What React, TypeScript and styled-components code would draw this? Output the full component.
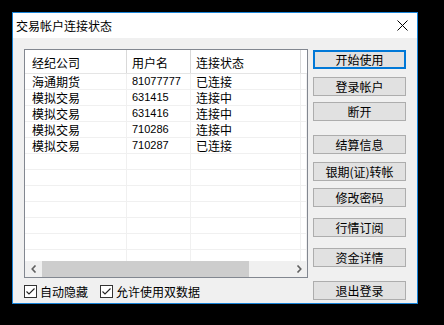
import React from "react";
import styled, { createGlobalStyle } from "styled-components";

const GlobalStyle = createGlobalStyle`
  html, body {
    margin: 0;
    padding: 0;
    background: #000;
  }
  body {
    font-family: "Noto Sans CJK SC", "Liberation Sans", sans-serif;
    font-size: 12px;
    color: #000;
  }
  * {
    box-sizing: border-box;
  }
`;

interface Account {
  broker: string;
  user: string;
  status: string;
}

const accounts: Account[] = [
  { broker: "海通期货", user: "81077777", status: "已连接" },
  { broker: "模拟交易", user: "631415", status: "连接中" },
  { broker: "模拟交易", user: "631416", status: "连接中" },
  { broker: "模拟交易", user: "710286", status: "连接中" },
  { broker: "模拟交易", user: "710287", status: "已连接" },
];

// gap above each button, taken from the original dialog
const buttons: { label: string; gap: number; primary?: boolean }[] = [
  { label: "开始使用", gap: 1, primary: true },
  { label: "登录帐户", gap: 8 },
  { label: "断开", gap: 6 },
  { label: "结算信息", gap: 14 },
  { label: "银期(证)转帐", gap: 8 },
  { label: "修改密码", gap: 7 },
  { label: "行情订阅", gap: 11 },
  { label: "资金详情", gap: 11 },
  { label: "退出登录", gap: 14 },
];

const EMPTY_ROWS = 8;

const Checkbox = ({ label }: { label: string }) => (
  <CheckLabel>
    <CheckBox>
      <svg width="11" height="11" viewBox="0 0 11 11">
        <path d="M1.5 5.5 L4 8 L9.5 2.5" fill="none" stroke="#222" strokeWidth="1.1" />
      </svg>
    </CheckBox>
    <span>{label}</span>
  </CheckLabel>
);

export default function App() {
  return (
    <>
      <GlobalStyle />
      <Backdrop>
        <Window>
          <TitleBar>
            <Title>交易帐户连接状态</Title>
            <CloseButton>
              <svg width="11" height="11" viewBox="0 0 11 11">
                <path d="M0.5 0.5 L10.5 10.5 M10.5 0.5 L0.5 10.5" stroke="#000" strokeWidth="1" />
              </svg>
            </CloseButton>
          </TitleBar>
          <Body>
            <LeftColumn>
              <ListBox>
                <HeaderRow>
                  <HeaderCell $first>经纪公司</HeaderCell>
                  <HeaderCell>用户名</HeaderCell>
                  <HeaderCell>连接状态</HeaderCell>
                  <HeaderFill />
                </HeaderRow>
                <Rows>
                  {accounts.map((a, i) => (
                    <Row key={i}>
                      <Cell $first>{a.broker}</Cell>
                      <Cell $number>{a.user}</Cell>
                      <Cell>{a.status}</Cell>
                      <Cell />
                    </Row>
                  ))}
                  {Array.from({ length: EMPTY_ROWS }).map((_, i) => (
                    <Row key={"e" + i}>
                      <Cell />
                      <Cell />
                      <Cell />
                      <Cell />
                    </Row>
                  ))}
                </Rows>
                <ScrollBar>
                  <ScrollArrow>
                    <svg width="6" height="8" viewBox="0 0 6 8">
                      <path d="M4.5 0.5 L1.2 4 L4.5 7.5" fill="none" stroke="#606060" strokeWidth="1.6" />
                    </svg>
                  </ScrollArrow>
                  <ScrollTrack>
                    <ScrollThumb />
                  </ScrollTrack>
                  <ScrollArrow>
                    <svg width="6" height="8" viewBox="0 0 6 8">
                      <path d="M1.5 0.5 L4.8 4 L1.5 7.5" fill="none" stroke="#606060" strokeWidth="1.6" />
                    </svg>
                  </ScrollArrow>
                </ScrollBar>
              </ListBox>
              <Options>
                <Checkbox label="自动隐藏" />
                <Checkbox label="允许使用双数据" />
              </Options>
            </LeftColumn>
            <ButtonColumn>
              {buttons.map((b) => (
                <DialogButton key={b.label} $gap={b.gap} $primary={b.primary}>
                  {b.label}
                </DialogButton>
              ))}
            </ButtonColumn>
          </Body>
        </Window>
      </Backdrop>
    </>
  );
}

const Backdrop = styled.div`
  width: 444px;
  height: 325px;
  padding: 12px 0 0 12px;
  background: #000;
`;

const Window = styled.div`
  width: 406px;
  height: 292px;
  border: 1px solid #1883d7;
  display: flex;
  flex-direction: column;
  background: #f0f0f0;
`;

const TitleBar = styled.div`
  height: 25px;
  background: #fff;
  display: flex;
  align-items: center;
  justify-content: space-between;
  padding: 0 9px 0 3px;
`;

const Title = styled.div`
  font-size: 12px;
  line-height: 14px;
  color: #000;
`;

const CloseButton = styled.div`
  display: flex;
  align-items: center;
  width: 11px;
  height: 11px;
`;

const Body = styled.div`
  flex: 1;
  display: flex;
  gap: 5px;
  padding: 11px 0 0 11px;
`;

const LeftColumn = styled.div`
  display: flex;
  flex-direction: column;
`;

const ListBox = styled.div`
  width: 284px;
  height: 229px;
  border: 1px solid #828790;
  background: #fff;
  display: flex;
  flex-direction: column;
`;

const HeaderRow = styled.div`
  height: 24px;
  flex: none;
  display: grid;
  grid-template-columns: 102px 64px 110px 1fr;
  border-bottom: 1px solid #e5e5e5;
`;

const HeaderCell = styled.div<{ $first?: boolean }>`
  display: flex;
  align-items: center;
  padding-left: ${({ $first }) => ($first ? "7px" : "5px")};
  padding-top: 1px;
  border-right: 1px solid #d9d9d9;
  font-size: 12px;
  white-space: nowrap;
`;

const HeaderFill = styled.div``;

const Rows = styled.div`
  flex: 1;
  overflow: hidden;
`;

const Row = styled.div`
  height: 16px;
  display: grid;
  grid-template-columns: 102px 64px 110px 1fr;
  border-bottom: 1px solid #f0f0f0;
`;

const Cell = styled.div<{ $first?: boolean; $number?: boolean }>`
  display: flex;
  align-items: center;
  padding-left: ${({ $first }) => ($first ? "7px" : "5px")};
  border-right: 1px solid #f0f0f0;
  white-space: nowrap;
  font-size: ${({ $number }) => ($number ? "11px" : "12px")};
  font-family: ${({ $number }) =>
    $number ? `"Liberation Sans", Arial, sans-serif` : `"Noto Sans CJK SC", sans-serif`};
  line-height: 15px;
`;

const ScrollBar = styled.div`
  height: 16px;
  flex: none;
  display: flex;
  background: #f0f0f0;
`;

const ScrollArrow = styled.div`
  width: 17px;
  display: flex;
  align-items: center;
  justify-content: center;
`;

const ScrollTrack = styled.div`
  flex: 1;
  display: flex;
  align-items: stretch;
  padding-left: 0px;
`;

const ScrollThumb = styled.div`
  width: 207px;
  background: #cdcdcd;
`;

const Options = styled.div`
  display: flex;
  gap: 12px;
  margin-top: 7px;
`;

const CheckLabel = styled.label`
  display: flex;
  align-items: center;
  gap: 3px;
  font-size: 12px;
  line-height: 13px;
`;

const CheckBox = styled.span`
  width: 13px;
  height: 13px;
  border: 1px solid #333;
  background: #fff;
  display: flex;
  align-items: center;
  justify-content: center;
`;

const ButtonColumn = styled.div`
  display: flex;
  flex-direction: column;
`;

const DialogButton = styled.div<{ $gap: number; $primary?: boolean }>`
  width: 93px;
  height: 19px;
  margin-top: ${({ $gap }) => $gap}px;
  background: #e1e1e1;
  border: ${({ $primary }) => ($primary ? "2px solid #0078d7" : "1px solid #adadad")};
  display: flex;
  align-items: center;
  justify-content: center;
  font-size: 12px;
  line-height: 14px;
  white-space: nowrap;
`;
